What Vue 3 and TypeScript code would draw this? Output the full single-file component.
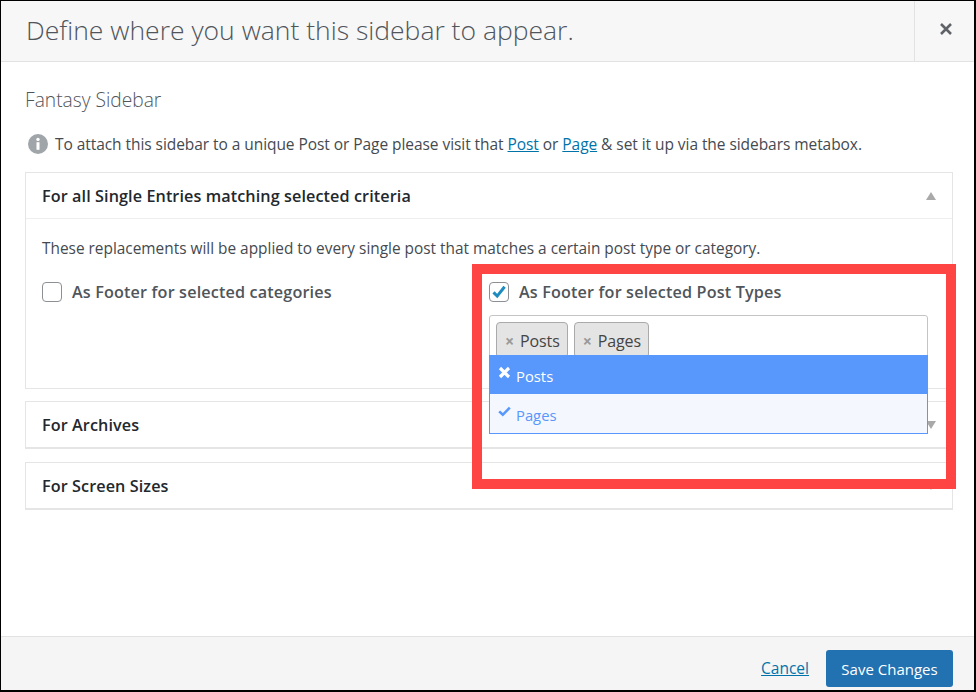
<script setup lang="ts">
const title = 'Define where you want this sidebar to appear.'
</script>

<template>
  <div class="modal">
    <header class="head">
      <h1>{{ title }}</h1>
      <button class="close" aria-label="Close">
        <svg width="14" height="14" viewBox="0 0 14 14"><path d="M2 2l10 10M12 2L2 12" stroke="#5f6368" stroke-width="2.6" fill="none" /></svg>
      </button>
    </header>
    <main class="body">
      <h2>Fantasy Sidebar</h2>
      <p class="note">
        <svg class="info" width="20" height="20" viewBox="0 0 20 20"><circle cx="10" cy="10" r="10" fill="#a0a5aa" /><circle cx="10" cy="5.4" r="1.7" fill="#fff" /><rect x="8.5" y="8.2" width="3" height="7.6" fill="#fff" /></svg>
        <span>To attach this sidebar to a unique Post or Page please visit that <a href="#">Post</a> or <a href="#">Page</a> &amp; set it up via the sidebars metabox.</span>
      </p>
      <section class="panel main-panel">
        <div class="phead bordered"><span>For all Single Entries matching selected criteria</span><i class="up"></i></div>
        <div class="pbody">
          <p class="desc">These replacements will be applied to every single post that matches a certain post type or category.</p>
          <div class="cols">
            <div class="check"><span class="box"></span><span>As Footer for selected categories</span></div>
            <div class="rcol">
              <div class="check">
                <span class="box">
                  <svg width="18" height="18" viewBox="0 0 18 18"><path d="M3.5 9.4l3.7 3.7L14.6 3.8" stroke="#1e8cbe" stroke-width="3" fill="none" /></svg>
                </span>
                <span>As Footer for selected Post Types</span>
              </div>
              <div class="select">
                <span class="chip"><b>×</b>Posts</span>
                <span class="chip"><b>×</b>Pages</span>
                <ul class="drop">
                  <li class="hover">
                    <svg width="13" height="13" viewBox="0 0 13 13"><path d="M2 2l9 9M11 2l-9 9" stroke="#fff" stroke-width="3.2" fill="none" /></svg>
                    <span>Posts</span>
                  </li>
                  <li class="sel">
                    <svg width="13" height="13" viewBox="0 0 13 13"><path d="M1.2 6.4l3.6 3.4 7-7.2" stroke="#5897fb" stroke-width="2.6" fill="none" /></svg>
                    <span>Pages</span>
                  </li>
                </ul>
              </div>
            </div>
          </div>
        </div>
      </section>
      <section class="panel mini"><div class="phead"><span>For Archives</span><i class="down"></i></div></section>
      <section class="panel mini"><div class="phead"><span>For Screen Sizes</span><i class="down"></i></div></section>
    </main>
    <footer class="foot">
      <a href="#">Cancel</a>
      <button class="save">Save Changes</button>
    </footer>
    <div class="frame"></div>
  </div>
</template>

<style>
html, body { margin: 0; background: #fff; }
</style>

<style scoped>
.modal {
  position: relative;
  box-sizing: border-box;
  width: 976px;
  height: 692px;
  border: 1px solid #000;
  border-right-width: 2px;
  border-bottom-width: 2px;
  display: flex;
  flex-direction: column;
  font-family: "Open Sans", "Noto Sans", sans-serif;
  color: #32373c;
  overflow: hidden;
}
.head {
  height: 61px;
  box-sizing: border-box;
  flex: none;
  display: flex;
  align-items: stretch;
  background: #f7f7f7;
  border-bottom: 1px solid #e2e2e2;
}
.head h1 {
  flex: 1;
  margin: 0;
  padding-left: 25px;
  font-size: 26.5px;
  font-weight: 300;
  line-height: 59px;
  color: #50555b;
}
.close {
  width: 60px;
  padding: 0 0 5px 2px;
  background: none;
  border: 0;
  border-left: 1px solid #e2e2e2;
  display: flex;
  align-items: center;
  justify-content: center;
}
.body {
  flex: 1;
  padding: 0 21px 0 24px;
  min-height: 0;
}
h2 {
  margin: 25px 0 0;
  font-size: 19.2px;
  line-height: 25px;
  font-weight: 300;
  color: #50555a;
}
.note {
  margin: 20px 0 0 3px;
  height: 24px;
  display: flex;
  align-items: center;
  gap: 7px;
  font-size: 15.5px;
  letter-spacing: -0.06px;
  color: #444a50;
  white-space: nowrap;
}
a { color: #0073aa; }
.panel {
  position: relative;
  margin-top: 16px;
  border: 1px solid #e5e5e5;
  background: #fff;
}
.main-panel { z-index: 1; background: transparent; }
.panel.mini {
  margin-top: 12px;
  border-bottom-width: 2px;
}
.panel.mini + .panel.mini { margin-top: 13px; }
.phead {
  height: 45px;
  padding: 0 16px;
  display: flex;
  align-items: center;
  justify-content: space-between;
  font-size: 16.2px;
  font-weight: 600;
  letter-spacing: 0.09px;
  color: #23282d;
}
.bordered { border-bottom: 1px solid #eee; }
.up, .down {
  width: 0;
  height: 0;
  border-left: 5px solid transparent;
  border-right: 5px solid transparent;
}
.up { border-bottom: 8px solid #a9a9a9; }
.down { border-top: 8px solid #a9a9a9; }
.pbody {
  height: 169px;
  box-sizing: border-box;
  padding: 20px 16px 0;
}
.desc {
  margin: 0;
  font-size: 15.4px;
  line-height: 20px;
  color: #444a50;
}
.cols {
  display: grid;
  grid-template-columns: 447px 439px;
  margin-top: 23px;
}
.check {
  height: 20px;
  display: flex;
  align-items: center;
  gap: 10px;
  font-size: 16.2px;
  font-weight: 600;
  letter-spacing: 0.15px;
  color: #50555a;
}
.box {
  box-sizing: border-box;
  width: 20px;
  height: 20px;
  border: 1px solid #8c8f94;
  border-radius: 4px;
  background: #fff;
  display: flex;
  align-items: center;
  justify-content: center;
}
.select {
  position: relative;
  box-sizing: border-box;
  margin-top: 13px;
  width: 439px;
  height: 41px;
  border: 1px solid #c4c4c4;
  border-radius: 3px 3px 0 0;
  padding: 6px 0 0 6px;
  display: flex;
  gap: 6px;
}
.chip {
  box-sizing: border-box;
  height: 36px;
  padding: 6px 7px 0 8px;
  background: #e4e4e4;
  border: 1px solid #aaa;
  border-radius: 4px;
  font-size: 16px;
  letter-spacing: -0.1px;
  line-height: 24px;
  color: #444;
}
.chip b {
  display: inline-block;
  width: 15px;
  color: #999;
  font-weight: 700;
}
.drop {
  position: absolute;
  left: -1px;
  top: 39px;
  width: 439px;
  box-sizing: border-box;
  margin: 0;
  padding: 0;
  list-style: none;
  border: 1px solid #5897fb;
  border-top: 0;
  font-size: 14.8px;
}
.drop li {
  height: 39px;
  display: flex;
  align-items: center;
  gap: 5px;
  padding-left: 8px;
}
.drop svg { margin-top: -4px; }
.drop span { margin-top: 2px; }
.hover { background: #5897fb; color: #fff; }
.sel { background: #f4f7fe; color: #5897fb; }
.foot {
  box-sizing: border-box;
  height: 54px;
  flex: none;
  background: #f5f5f5;
  border-top: 1px solid #e2e2e2;
  display: flex;
  align-items: flex-start;
  justify-content: flex-end;
  gap: 17px;
  padding: 13px 21px 0 0;
  font-size: 15.5px;
}
.foot a { line-height: 37px; }
.save {
  width: 127px;
  height: 37px;
  background: #2271b1;
  border: 0;
  border-radius: 3px;
  color: #fff;
  font: 500 15px "Open Sans", "Noto Sans", sans-serif;
  padding: 0;
}
.frame {
  position: absolute;
  z-index: 2;
  left: 471px;
  top: 263px;
  width: 484px;
  height: 225px;
  box-sizing: border-box;
  border: 10px solid #ff4444;
  pointer-events: none;
}
</style>
